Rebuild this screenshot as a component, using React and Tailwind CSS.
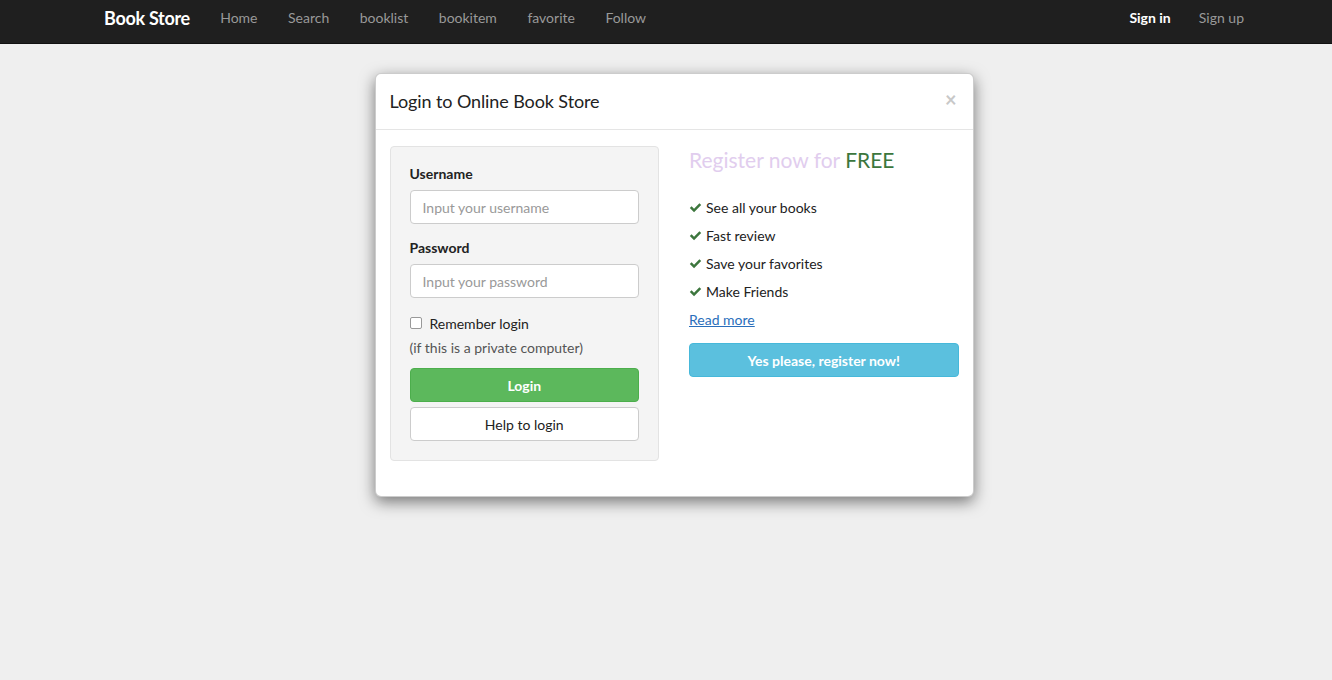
import React from 'react';

const navLinks = ['Home', 'Search', 'booklist', 'bookitem', 'favorite', 'Follow'];
const perks = ['See all your books', 'Fast review', 'Save your favorites', 'Make Friends'];

function Check() {
  return (
    <svg viewBox="0 0 16 16" className="w-[13px] h-[13px] mr-[4px] shrink-0" fill="#3c763d">
      <path d="M1 8.6 L3.2 6.4 L6.2 9.4 L12.8 2.8 L15 5 L6.2 13.8 Z" />
    </svg>
  );
}

function Navbar() {
  return (
    <div className="h-[44px] bg-[#1f1f1f] border-b border-[#111]">
      <div className="w-[1170px] mx-auto h-full flex items-start pt-[8px] px-[15px] leading-[20px]">
        <span className="text-white text-[18px] font-bold tracking-[-0.3px] ml-[8px] mr-[15px]">Book Store</span>
        {navLinks.map(l => (
          <span key={l} className="px-[15.25px] text-[14px] text-[#999]">{l}</span>
        ))}
        <div className="ml-auto flex items-center mr-[-23px]">
          <span className="pl-[15px] pr-[14px] text-[14px] text-white font-bold">Sign in</span>
          <span className="pl-[14px] pr-[15px] text-[14px] text-[#999]">Sign up</span>
        </div>
      </div>
    </div>
  );
}

function LoginModal() {
  return (
    <div className="w-[599px] mx-auto mt-[29px] bg-white border border-black/20 rounded-[6px] shadow-[0_5px_15px_rgba(0,0,0,0.5)]">
      {/* header */}
      <div className="h-[56px] px-[14px] flex items-center justify-between border-b border-[#e5e5e5]">
        <h4 className="text-[18px] text-[#222] tracking-[-0.1px]">Login to Online Book Store</h4>
        <span className="text-[#c8c8c8] text-[20px] font-bold leading-none mr-[2px] -mt-[6px]">×</span>
      </div>

      {/* body */}
      <div className="px-[14px] pt-[16px] pb-[35px] grid grid-cols-2 gap-[30px]">
        <div className="bg-[#f4f4f4] border border-[#e3e3e3] rounded-[4px] px-[19px] pt-[17px] pb-[19px]">
          <label className="block text-[14px] leading-[20px] font-bold text-[#222] mb-[6px]">Username</label>
          <input
            placeholder="Input your username"
            className="block w-full h-[34px] px-[12px] bg-white border border-[#ccc] rounded-[4px] text-[14px] placeholder:text-[#999] outline-none"
          />
          <label className="block text-[14px] leading-[20px] font-bold text-[#222] mt-[14px] mb-[6px]">Password</label>
          <input
            type="password"
            placeholder="Input your password"
            className="block w-full h-[34px] px-[12px] bg-white border border-[#ccc] rounded-[4px] text-[14px] placeholder:text-[#999] outline-none"
          />
          <label className="flex items-center h-[20px] mt-[15px] text-[14px] text-[#222]">
            <span className="w-[12px] h-[12px] border border-[#999] rounded-[2px] bg-white mr-[8px]" />
            Remember login
          </label>
          <p className="text-[14px] leading-[20px] text-[#555] mt-[5px]">(if this is a private computer)</p>
          <button className="block w-full h-[34px] mt-[10px] bg-[#5cb85c] border border-[#4cae4c] rounded-[4px] text-white text-[14px] font-bold">
            Login
          </button>
          <button className="block w-full h-[34px] mt-[5px] bg-white border border-[#ccc] rounded-[4px] text-[#222] text-[14px]">
            Help to login
          </button>
        </div>

        <div className="pt-[1px]">
          <h3 className="text-[21px] text-[#e1cdee] leading-[26px]">
            Register now for <span className="text-[#3c763d]">FREE</span>
          </h3>
          <ul className="mt-[20px] text-[14px] text-[#222]">
            {perks.map(p => (
              <li key={p} className="flex items-center h-[28px]">
                <Check />
                {p}
              </li>
            ))}
          </ul>
          <a className="block h-[28px] mt-[1px] leading-[28px] text-[14px] text-[#2a6ebb] underline">Read more</a>
          <button className="block w-full h-[34px] mt-[9px] bg-[#5bc0de] border border-[#46b8da] rounded-[4px] text-white text-[14px] font-bold">
            Yes please, register now!
          </button>
        </div>
      </div>
    </div>
  );
}

export default function App() {
  return (
    <div className="min-h-[680px] bg-[#efefef] font-['Lato','Liberation_Sans',sans-serif]">
      <Navbar />
      <div className="pl-[16px]">
        <LoginModal />
      </div>
    </div>
  );
}
